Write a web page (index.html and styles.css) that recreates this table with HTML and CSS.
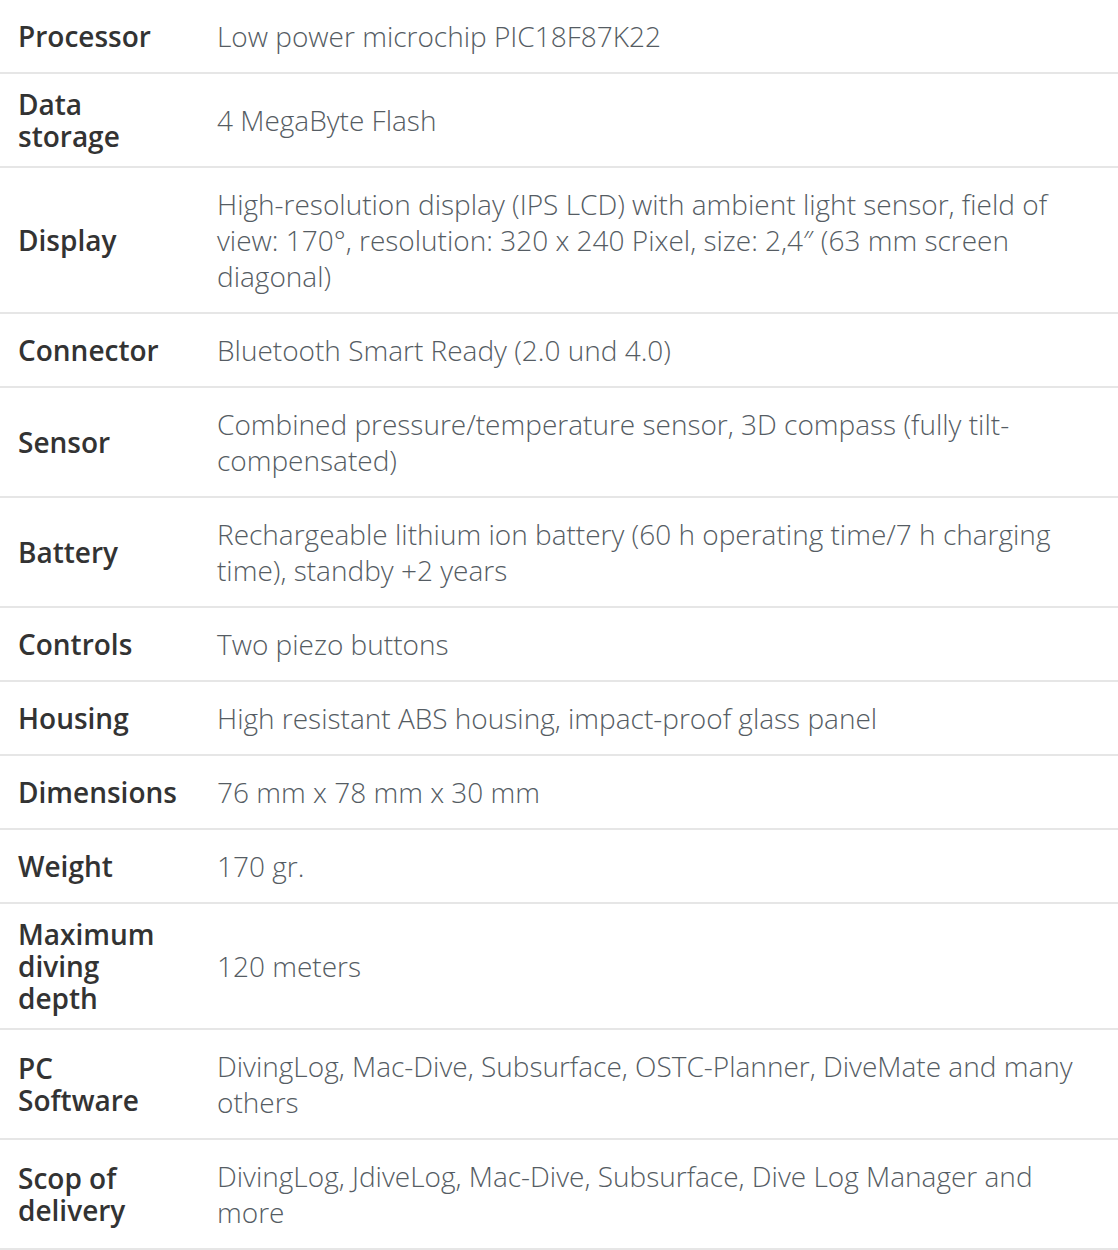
FILE: index.html
```html
<!DOCTYPE html>
<html>
<head>
<meta charset="utf-8">
<link rel="stylesheet" href="styles.css">
</head>
<body>
<table class="specs">
  <colgroup><col class="col-label"><col class="col-value"></colgroup>
  <tbody>
    <tr><th>Processor</th><td>Low power microchip PIC18F87K22</td></tr>
    <tr><th>Data storage</th><td>4 MegaByte Flash</td></tr>
    <tr><th>Display</th><td>High-resolution display (IPS LCD) with ambient light sensor, field of view: 170°, resolution: 320 x 240 Pixel, size: 2,4″ (63 mm screen diagonal)</td></tr>
    <tr><th>Connector</th><td>Bluetooth Smart Ready (2.0 und 4.0)</td></tr>
    <tr><th>Sensor</th><td>Combined pressure/temperature sensor, 3D compass (fully tilt-compensated)</td></tr>
    <tr><th>Battery</th><td>Rechargeable lithium ion battery (60 h operating time/7 h charging time), standby +2 years</td></tr>
    <tr><th>Controls</th><td>Two piezo buttons</td></tr>
    <tr><th>Housing</th><td>High resistant ABS housing, impact-proof glass panel</td></tr>
    <tr><th>Dimensions</th><td>76 mm x 78 mm x 30 mm</td></tr>
    <tr><th>Weight</th><td>170 gr.</td></tr>
    <tr><th>Maximum diving depth</th><td>120 meters</td></tr>
    <tr><th>PC Software</th><td>DivingLog, Mac-Dive, Subsurface, OSTC-Planner, DiveMate and many others</td></tr>
    <tr><th>Scop of delivery</th><td>DivingLog, JdiveLog, Mac-Dive, Subsurface, Dive Log Manager and more</td></tr>
  </tbody>
</table>
</body>
</html>
```

FILE: styles.css
```css
html, body {
  margin: 0;
  padding: 0;
  background: #fff;
}
.specs {
  width: 1118px;
  border-collapse: collapse;
  table-layout: fixed;
  font-family: "Open Sans", "Liberation Sans", sans-serif;
}
.col-label {
  width: 199px;
}
.specs tr {
  border-bottom: 2px solid #e6e6e6;
}
.specs th {
  padding: 14px 39px 14px 18px;
  text-align: left;
  vertical-align: middle;
  font-size: 28px;
  line-height: 32px;
  font-weight: 600;
  color: #333333;
}
.specs td {
  padding: 18px 18px 18px 18px;
  vertical-align: middle;
  font-size: 28px;
  line-height: 36px;
  font-weight: 300;
  color: #555c63;
}
```
